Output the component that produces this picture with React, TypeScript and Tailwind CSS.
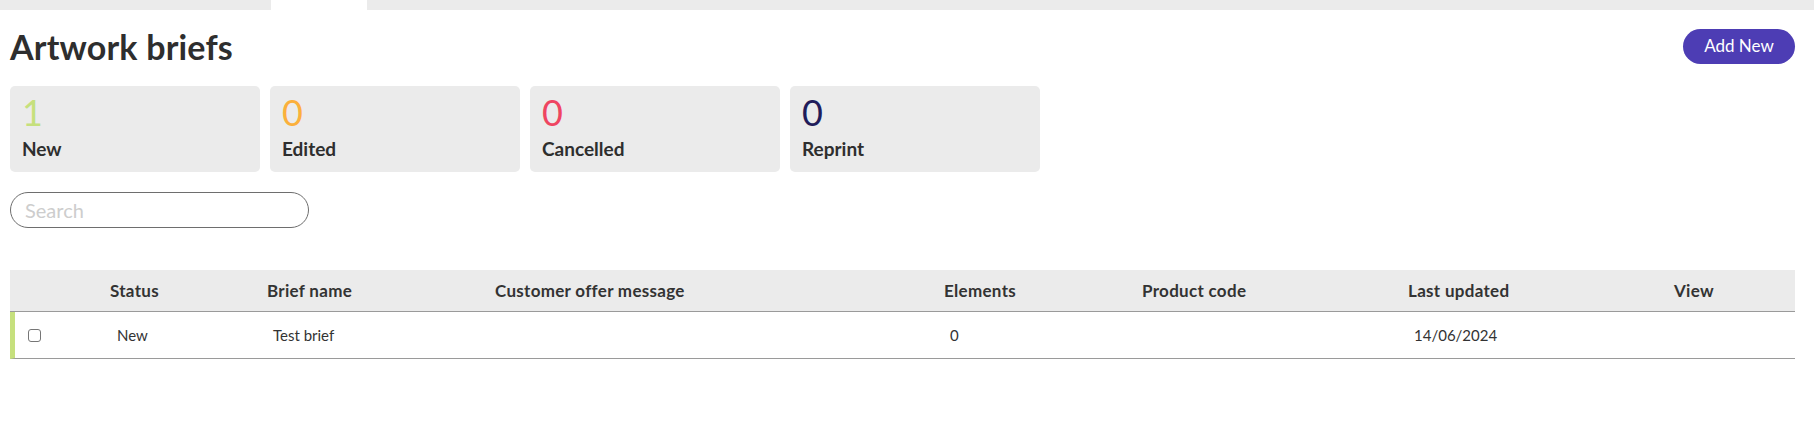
import React from 'react'

const stats = [
  { value: 1, label: 'New', color: 'text-[#c6e07d]' },
  { value: 0, label: 'Edited', color: 'text-[#fbb03b]' },
  { value: 0, label: 'Cancelled', color: 'text-[#ef4561]' },
  { value: 0, label: 'Reprint', color: 'text-[#211c5a]' }
]

const columns = [
  'Status',
  'Brief name',
  'Customer offer message',
  'Elements',
  'Product code',
  'Last updated',
  'View'
]

const rows = [
  {
    status: 'New',
    name: 'Test brief',
    message: '',
    elements: '0',
    code: '',
    updated: '14/06/2024'
  }
]

const gridCols = 'grid grid-cols-[100px_157px_228px_449px_198px_266px_266px_1fr]'

export default function App() {
  return (
    <div className="min-h-[435px] bg-white text-[#333] font-['Lato',sans-serif]">
      <div className="flex h-[10px]">
        <div className="w-[271px] bg-[#ebebeb]" />
        <div className="w-[96px]" />
        <div className="flex-1 bg-[#ebebeb]" />
      </div>

      <div className="px-[10px] pr-[19px]">
        <div className="flex items-center justify-between pt-[17px]">
          <h1 className="text-[34px] font-bold leading-[40px] tracking-[0.2px] text-[#2e2e2e]">Artwork briefs</h1>
          <button className="mb-[2px] h-[35px] w-[112px] rounded-full bg-[#4d3db4] text-[17px] text-white">
            Add New
          </button>
        </div>

        <div className="mt-[19px] flex gap-[10px]">
          {stats.map(stat => (
            <div key={stat.label} className="h-[86px] w-[250px] rounded-[5px] bg-[#ebebeb] px-[12px] pt-[6px]">
              <div className={`text-[36px] font-normal leading-[40px] ${stat.color}`}>{stat.value}</div>
              <div className="mt-[6px] text-[19px] font-bold leading-[22px] text-[#2e2e2e]">{stat.label}</div>
            </div>
          ))}
        </div>

        <input
          placeholder="Search"
          className="mt-[20px] block h-[36px] w-[299px] rounded-full border border-[#6e6e6e] px-[14px] text-[20px] placeholder:text-[#cdcdcd] outline-none"
        />

        <div className="mt-[42px]">
          <div className={`${gridCols} h-[42px] items-center border-b border-[#9a9a9a] bg-[#ebebeb] text-[17px] font-bold tracking-[0.3px]`}>
            <div />
            {columns.map(col => (
              <div key={col}>{col}</div>
            ))}
          </div>
          {rows.map(row => (
            <div
              key={row.name}
              className={`${gridCols} h-[47px] items-center border-b border-[#9a9a9a] border-l-[5px] border-l-[#c6e07d] text-[15px]`}
            >
              <div className="pl-[13px]">
                <div className="h-[13px] w-[13px] rounded-[3px] border border-[#767676] bg-white" />
              </div>
              <div className="pl-[2px]">{row.status}</div>
              <div className="pl-[1px]">{row.name}</div>
              <div className="pl-[1px]">{row.message}</div>
              <div className="pl-[1px]">{row.elements}</div>
              <div className="pl-[1px]">{row.code}</div>
              <div className="pl-[1px]">{row.updated}</div>
              <div />
            </div>
          ))}
        </div>
      </div>
    </div>
  )
}
